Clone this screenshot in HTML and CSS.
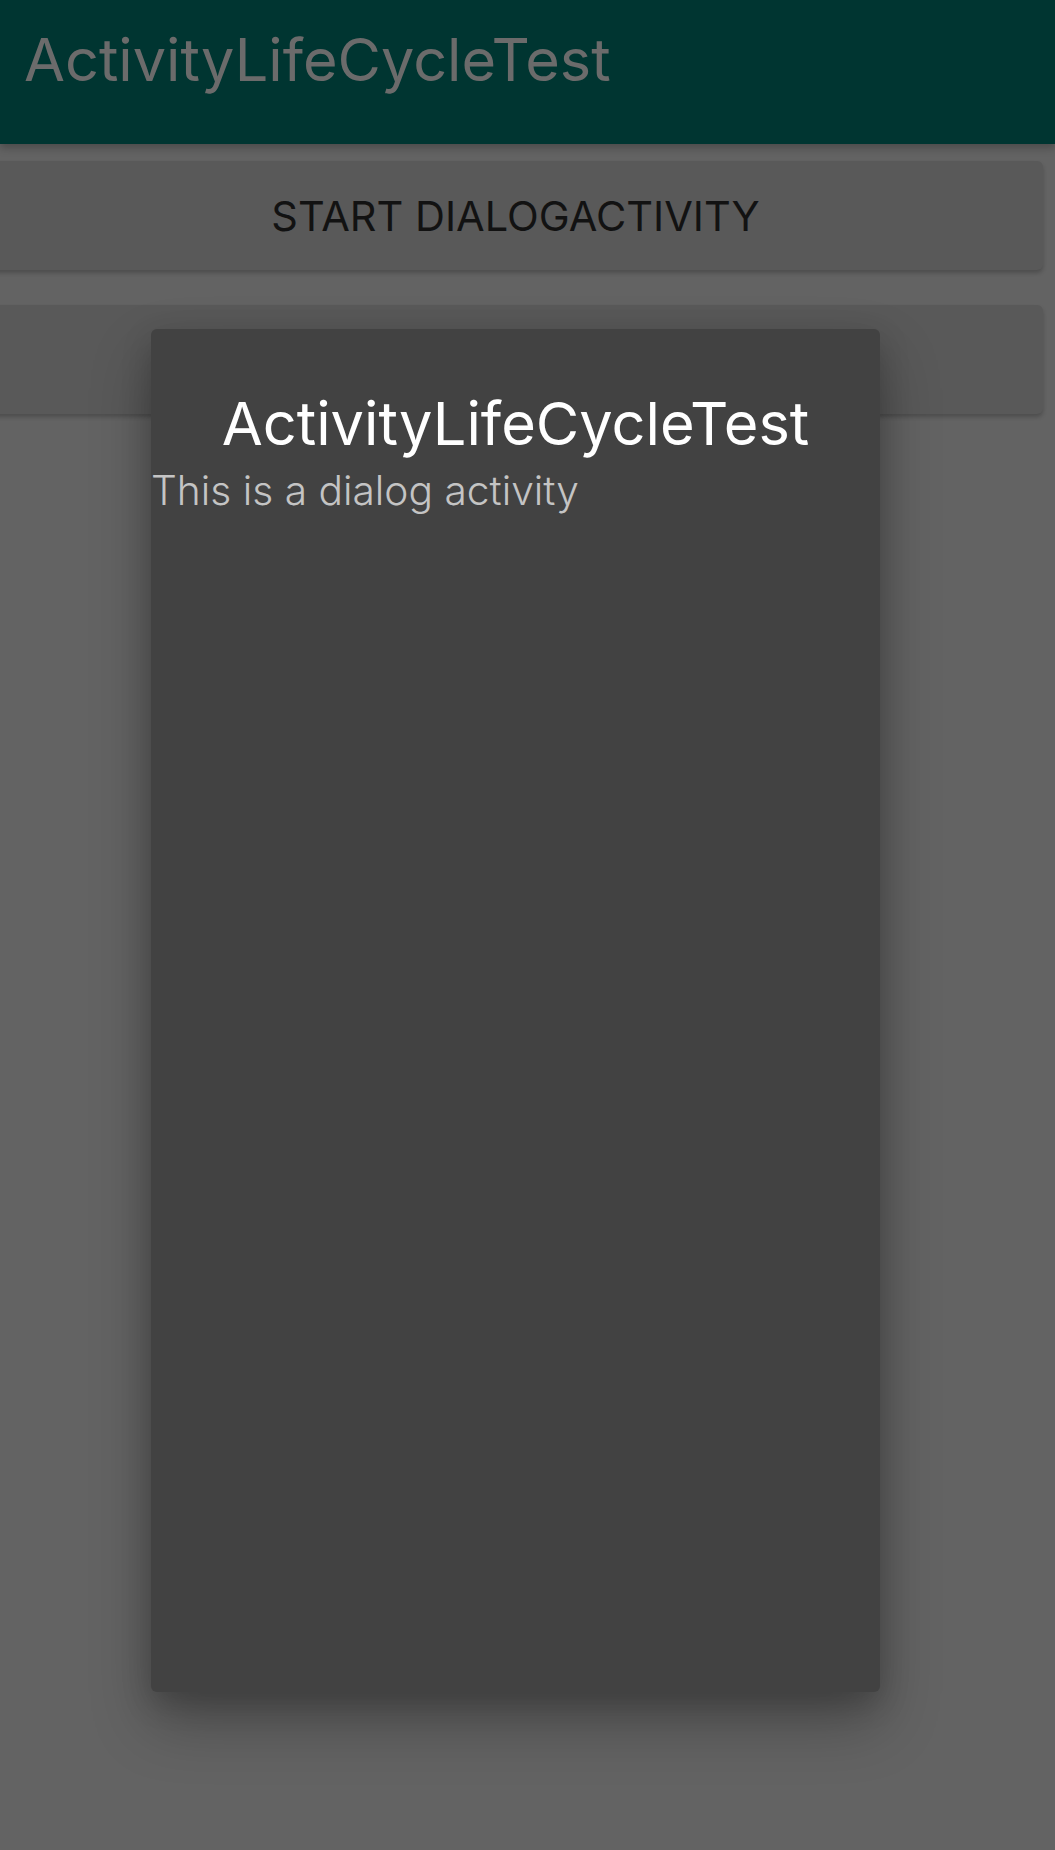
FILE: index.html
```html
<!DOCTYPE html>
<html>
<head>
<meta charset="utf-8">
<link rel="stylesheet" href="styles.css">
</head>
<body>
<header class="appbar"><span class="appbar-title">ActivityLifeCycleTest</span></header>
<main class="content">
  <div class="btn">START DIALOGACTIVITY</div>
  <div class="btn"></div>
</main>
<div class="dialog">
  <div class="dialog-title">ActivityLifeCycleTest</div>
  <div class="dialog-body">This is a dialog activity</div>
</div>
</body>
</html>
```
FILE: styles.css
```css
html, body {
  margin: 0;
  padding: 0;
}
body {
  width: 1055px;
  height: 1850px;
  background: #636363;
  font-family: Inter, Roboto, "Liberation Sans", sans-serif;
  position: relative;
  overflow: hidden;
}
.appbar {
  height: 144px;
  background: #003531;
  box-shadow: 0 4px 8px rgba(0,0,0,0.25);
  display: flex;
  align-items: flex-start;
  padding-left: 24px;
  position: relative;
  z-index: 1;
}
.appbar-title {
  font-size: 59.4px;
  color: #6b6b6b;
  line-height: 1;
  margin-top: 30px;
}
.content {
  display: flex;
  flex-direction: column;
  gap: 35px;
  padding-top: 17px;
}
.btn {
  margin-left: -12px;
  width: 1055px;
  height: 109px;
  background: #595959;
  border-radius: 6px;
  box-shadow: 0 3px 4px rgba(0,0,0,0.22);
  display: flex;
  align-items: center;
  justify-content: center;
  font-size: 41.5px;
  color: #121212;
}
.dialog {
  position: absolute;
  left: 151px;
  top: 329px;
  width: 729px;
  height: 1363px;
  background: #424242;
  border-radius: 6px;
  box-shadow: 0 30px 60px rgba(0,0,0,0.28), 0 10px 30px rgba(0,0,0,0.18);
  display: flex;
  flex-direction: column;
}
.dialog-title {
  font-size: 59.5px;
  color: #ffffff;
  text-align: center;
  line-height: 1;
  margin-top: 65px;
}
.dialog-body {
  font-size: 40.7px;
  font-weight: 300;
  color: #c4c4c4;
  line-height: 1;
  margin-top: 17px;
}
```
